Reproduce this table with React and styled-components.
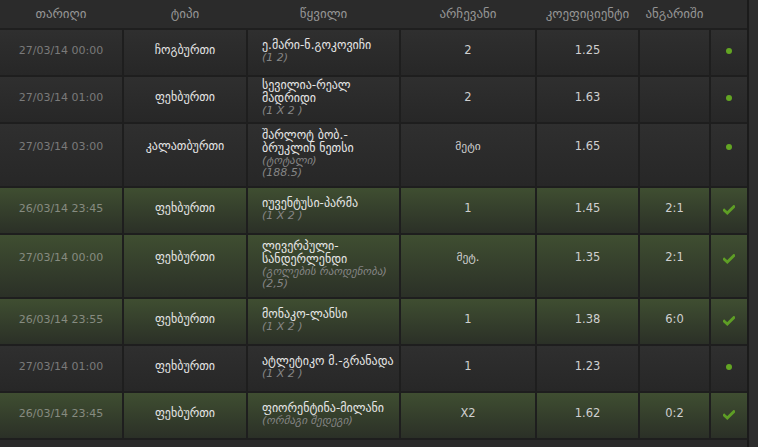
import styled, { createGlobalStyle } from "styled-components";

const Global = createGlobalStyle`
  html, body {
    margin: 0;
    padding: 0;
    background: #2b2b2b;
  }
  body {
    font-family: "DejaVu Sans", "Noto Sans", sans-serif;
  }
`;

const COLS = "122px 122px 151px 134px 101px 69px 36px";

const headers = ["თარიღი", "ტიპი", "წყვილი", "არჩევანი", "კოეფიციენტი", "ანგარიში", ""];

const rows = [
  { date: "27/03/14 00:00", type: "ჩოგბურთი", match: ["ე.მარი-ნ.გოკოვიჩი"], sub: ["(1 2)"], pick: "2", coef: "1.25", score: "", won: false },
  { date: "27/03/14 01:00", type: "ფეხბურთი", match: ["სევილია-რეალ", "მადრიდი"], sub: ["(1 X 2 )"], pick: "2", coef: "1.63", score: "", won: false },
  { date: "27/03/14 03:00", type: "კალათბურთი", match: ["შარლოტ ბობ.-", "ბრუკლინ ნეთსი"], sub: ["(ტოტალი)", "(188.5)"], pick: "მეტი", coef: "1.65", score: "", won: false, tall: true },
  { date: "26/03/14 23:45", type: "ფეხბურთი", match: ["იუვენტუსი-პარმა"], sub: ["(1 X 2 )"], pick: "1", coef: "1.45", score: "2:1", won: true },
  { date: "27/03/14 00:00", type: "ფეხბურთი", match: ["ლივერპული-", "სანდერლენდი"], sub: ["(გოლების რაოდენობა)", "(2,5)"], pick: "მეტ.", coef: "1.35", score: "2:1", won: true, tall: true },
  { date: "26/03/14 23:55", type: "ფეხბურთი", match: ["მონაკო-ლანსი"], sub: ["(1 X 2 )"], pick: "1", coef: "1.38", score: "6:0", won: true },
  { date: "27/03/14 01:00", type: "ფეხბურთი", match: ["ატლეტიკო მ.-გრანადა"], sub: ["(1 X 2 )"], pick: "1", coef: "1.23", score: "", won: false },
  { date: "26/03/14 23:45", type: "ფეხბურთი", match: ["ფიორენტინა-მილანი"], sub: ["(ორმაგი შედეგი)"], pick: "X2", coef: "1.62", score: "0:2", won: true },
];

export default function App() {
  return (
    <>
      <Global />
      <Page>
        <Board>
          <Head>
            {headers.map((h, i) => (
              <HeadCell key={i}>{h}</HeadCell>
            ))}
          </Head>
          <Body>
            {rows.map((r, i) => (
              <Row key={i} $tall={r.tall}>
                <Cell $won={r.won} $tall={r.tall}>
                  <DateText $won={r.won}>{r.date}</DateText>
                </Cell>
                <Cell $won={r.won} $tall={r.tall}>
                  <TypeText>{r.type}</TypeText>
                </Cell>
                <MatchCell $won={r.won}>
                  {r.match.map((m, j) => (
                    <MatchLine key={j}>{m}</MatchLine>
                  ))}
                  {r.sub.map((s, j) => (
                    <SubLine key={j}>{s}</SubLine>
                  ))}
                </MatchCell>
                <Cell $won={r.won} $tall={r.tall}>
                  <Value>{r.pick}</Value>
                </Cell>
                <Cell $won={r.won} $tall={r.tall}>
                  <Value>{r.coef}</Value>
                </Cell>
                <Cell $won={r.won} $tall={r.tall}>
                  <Value>{r.score}</Value>
                </Cell>
                <Cell $won={r.won} $tall={r.tall}>
                  {r.won ? (
                    <Check viewBox="0 0 12 10">
                      <path d="M1.2 5.2 L4.3 8 L10.8 1.6" fill="none" stroke="#5e9e25" strokeWidth="2.8" strokeLinecap="square" />
                    </Check>
                  ) : (
                    <Dot />
                  )}
                </Cell>
              </Row>
            ))}
          </Body>
        </Board>
        <Scroll />
      </Page>
    </>
  );
}

const Page = styled.div`
  display: flex;
  width: 758px;
  height: 447px;
  overflow: hidden;
  background: #2b2b2b;
`;

const Board = styled.div`
  width: 747px;
  display: flex;
  flex-direction: column;
`;

const Head = styled.div`
  display: grid;
  grid-template-columns: ${COLS};
  column-gap: 2px;
  height: 28px;
  background: #2b2b2b;
  border-bottom: 2px solid #1f1f1f;
`;

const HeadCell = styled.div`
  display: flex;
  align-items: center;
  justify-content: center;
  padding-bottom: 2px;
  font-size: 13px;
  color: #959595;
  white-space: nowrap;
`;

const Body = styled.div`
  display: grid;
  row-gap: 2px;
  background: #1e1e1e;
  padding-bottom: 2px;
`;

const Row = styled.div`
  display: grid;
  grid-template-columns: ${COLS};
  column-gap: 2px;
  height: ${(p) => (p.$tall ? "62px" : "45px")};
`;

const Cell = styled.div`
  display: flex;
  justify-content: center;
  align-items: flex-start;
  padding-top: ${(p) => (p.$tall ? "16px" : "14px")};
  box-sizing: border-box;
  background: ${(p) =>
    p.$won
      ? "linear-gradient(#3f4e31, #2b3027)"
      : "linear-gradient(#2f2f2f, #272727)"};
`;

const MatchCell = styled.div`
  display: flex;
  flex-direction: column;
  justify-content: center;
  padding: 0 0 2px 14px;
  box-sizing: border-box;
  background: ${(p) =>
    p.$won
      ? "linear-gradient(#3f4e31, #2b3027)"
      : "linear-gradient(#2f2f2f, #272727)"};
`;

const DateText = styled.span`
  font-size: 11px;
  line-height: 13px;
  color: ${(p) => (p.$won ? "#868b80" : "#7a7a7a")};
  white-space: nowrap;
`;

const TypeText = styled.span`
  font-size: 12px;
  line-height: 13px;
  color: #e4e4e4;
  white-space: nowrap;
`;

const Value = styled.span`
  font-size: 11.5px;
  line-height: 13px;
  color: #cfcfcf;
  white-space: nowrap;
`;

const MatchLine = styled.div`
  font-size: 12px;
  line-height: 13px;
  color: #e6e6e6;
  white-space: nowrap;
`;

const SubLine = styled.div`
  font-size: 11px;
  line-height: 12.5px;
  font-style: italic;
  color: #858585;
  white-space: nowrap;
`;

const Dot = styled.span`
  width: 6px;
  height: 6px;
  margin-top: 4px;
  border-radius: 50%;
  background: #63a523;
`;

const Check = styled.svg`
  width: 12px;
  height: 10px;
  margin-top: 3px;
`;

const Scroll = styled.div`
  width: 9px;
  border-left: 2px solid #1b1b1b;
  background: #2d2d2d;
`;
